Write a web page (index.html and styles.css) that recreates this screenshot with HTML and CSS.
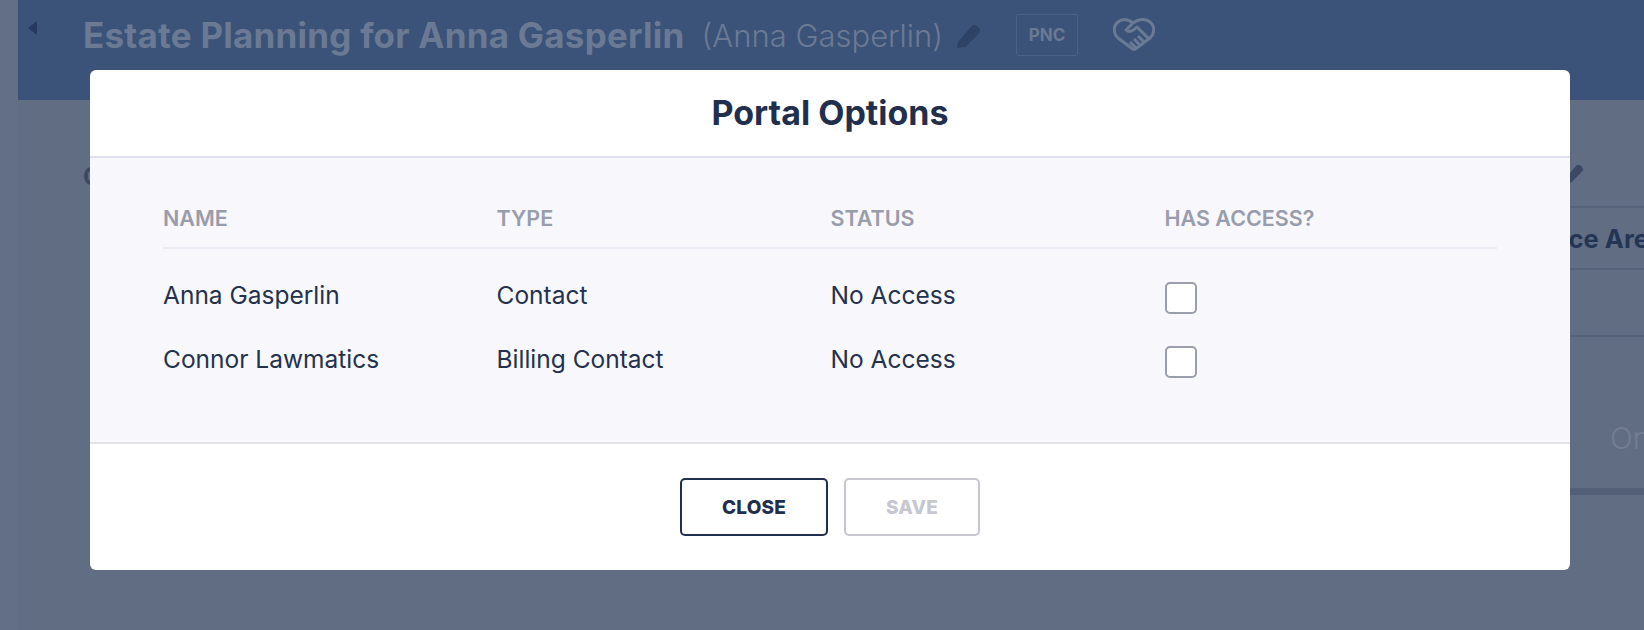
FILE: index.html
```html
<!DOCTYPE html>
<html lang="en">
    <head>
        <meta charset="UTF-8" />
        <meta name="viewport" content="width=device-width, initial-scale=1.0" />
        <title>Portal Options</title>

        <link rel="stylesheet" href="styles.css">
    </head>
    <body>
        <div class="page">
            <aside class="sidebar"></aside>

            <div class="main">
                <header class="matter-bar">
                    <span class="collapse-arrow"></span>
                    <h1>Estate Planning for Anna Gasperlin</h1>
                    <span class="client">(Anna Gasperlin)</span>
                    <svg class="pencil" viewBox="0 0 24 24">
                        <path d="M2 18 L15 3 Q17 1 20 3 L22 5 Q24 8 22 10 L9 23 L1 24 Z" />
                    </svg>
                    <span class="pnc">PNC</span>
                    <svg class="handshake" viewBox="0 0 42 34">
                        <path d="M21 32 L5 20 C0 15 0 8 5 4 C10 0 16 2 20 5" />
                        <path d="M21 32 L37 20 C42 15 42 8 37 4 C32 0 25 1 20 5 L13 12 C16 15 20 13 24 9 L35 20" />
                        <path d="M31 24 L25 18 M27 27 L21 21 M23 30 L17 24" />
                    </svg>
                </header>

                <div class="behind">
                    <span class="behind-label">Contact</span>
                    <div class="behind-panel">
                        <svg class="pencil pencil-small" viewBox="0 0 24 24">
                            <path d="M2 18 L15 3 Q17 1 20 3 L22 5 Q24 8 22 10 L9 23 L1 24 Z" />
                        </svg>
                        <div class="panel-row panel-tab">Practice Area</div>
                        <div class="panel-row panel-empty"></div>
                        <div class="panel-row panel-text">Once</div>
                        <div class="panel-bar"></div>
                    </div>
                </div>
            </div>
        </div>

        <div class="overlay">
            <div class="modal">
                <h2>Portal Options</h2>

                <div class="modal-body">
                    <div class="grid-row grid-head">
                        <span>Name</span>
                        <span>Type</span>
                        <span>Status</span>
                        <span>Has Access?</span>
                    </div>
                    <div class="grid-row">
                        <span>Anna Gasperlin</span>
                        <span>Contact</span>
                        <span>No Access</span>
                        <span class="check"></span>
                    </div>
                    <div class="grid-row">
                        <span>Connor Lawmatics</span>
                        <span>Billing Contact</span>
                        <span>No Access</span>
                        <span class="check"></span>
                    </div>
                </div>

                <div class="modal-footer">
                    <button class="btn btn-close">Close</button>
                    <button class="btn btn-save">Save</button>
                </div>
            </div>
        </div>
    </body>
</html>
```

FILE: styles.css
```css
* {
    box-sizing: border-box;
    font-family: Inter, "Open Sans", Arial, sans-serif;
}
html,
body {
    margin: 0;
    height: 100%;
    overflow: hidden;
}
body {
    position: relative;
    background: #606d83;
}
.page {
    display: flex;
    height: 630px;
}
.sidebar {
    width: 18px;
    background: #636f86;
}
.main {
    flex: 1;
    min-width: 0;
}

/* blurred page behind the dialog */
.matter-bar {
    display: flex;
    align-items: center;
    height: 100px;
    padding: 0 0 30px 10px;
    background: #3b5378;
    color: #6b7a94;
}
.collapse-arrow {
    width: 0;
    height: 0;
    margin-bottom: 14px;
    border-top: 7px solid transparent;
    border-bottom: 7px solid transparent;
    border-right: 9px solid #253a5e;
}
.matter-bar h1 {
    margin: 0 0 0 46px;
    font-size: 35px;
    font-weight: 700;
    letter-spacing: 0.23px;
    white-space: nowrap;
}
.client {
    margin-left: 17px;
    font-size: 31px;
    font-weight: 300;
    white-space: nowrap;
}
.pencil {
    width: 25px;
    height: 25px;
    margin-left: 13px;
    fill: #2d4265;
}
.pnc {
    display: flex;
    align-items: center;
    justify-content: center;
    width: 62px;
    height: 42px;
    margin-left: 35px;
    border: 1px solid #4c6183;
    border-radius: 2px;
    font-size: 17px;
    font-weight: 700;
}
.handshake {
    width: 42px;
    height: 34px;
    margin-left: 35px;
    fill: none;
    stroke: #6b7a94;
    stroke-width: 3;
    stroke-linejoin: round;
}
.behind {
    display: flex;
    justify-content: space-between;
    padding: 64px 0 0 65px;
}
.behind-label {
    margin-top: -2px;
    font-size: 24px;
    font-weight: 700;
    color: #3b4965;
}
.behind-panel {
    width: 300px;
    flex-shrink: 0;
    margin-right: -152px;
}
.pencil-small {
    display: block;
    width: 20px;
    height: 20px;
    margin: -1px 0 23px 68px;
    fill: #3b4965;
}
.panel-row {
    border-bottom: 2px solid #556279;
    white-space: nowrap;
}
.panel-tab {
    height: 64px;
    padding-top: 15px;
    border-top: 2px solid #556279;
    font-size: 25.5px;
    font-weight: 700;
    color: #243454;
}
.panel-empty {
    height: 67px;
}
.panel-text {
    height: 151px;
    padding: 83px 0 0 114px;
    border-bottom: 0;
    font-size: 30px;
    font-weight: 300;
    color: #737e93;
}
.panel-bar {
    height: 7px;
    background: #525f76;
}

/* dialog */
.overlay {
    position: absolute;
    top: 0;
    left: 16px;
    right: 0;
    display: flex;
    justify-content: center;
    padding-top: 70px;
}
.modal {
    width: 1480px;
    height: 500px;
    border-radius: 6px;
    background: #fff;
    overflow: hidden;
    color: #24324d;
}
.modal h2 {
    margin: 0;
    height: 88px;
    border-bottom: 2px solid #dfe2ea;
    font-size: 34px;
    font-weight: 700;
    line-height: 86px;
    text-align: center;
    color: #1f2f4d;
}
.modal-body {
    height: 286px;
    padding: 39px 73px 0;
    border-bottom: 2px solid #e2e2e9;
    background: #f7f7fc;
}
.grid-row {
    display: grid;
    grid-template-columns: 333.5px 334px 334px 1fr;
    align-items: center;
    height: 64px;
    font-size: 24.5px;
    font-weight: 400;
}
.grid-row span {
    margin-bottom: 6px;
}
.grid-row .check {
    margin-bottom: 0;
}
.grid-head {
    height: 52px;
    margin-bottom: 17px;
    padding-bottom: 7px;
    border-bottom: 2px solid #e9ebf4;
    font-size: 21.5px;
    font-weight: 600;
    text-transform: uppercase;
    color: #999dab;
}
.grid-head span {
    margin-bottom: 2px;
}
.check {
    width: 32px;
    height: 32px;
    border: 2px solid #9a9daa;
    border-radius: 5px;
    background: #fff;
}
.modal-footer {
    display: flex;
    justify-content: center;
    gap: 16px;
    padding-top: 34px;
}
.btn {
    height: 58px;
    border: 2px solid #1f2f4d;
    border-radius: 5px;
    background: #fff;
    font-size: 19px;
    font-weight: 800;
    letter-spacing: 0.2px;
    text-transform: uppercase;
    color: #1f2f4d;
}
.btn-close {
    width: 148px;
}
.btn-save {
    width: 136px;
    border-color: #c6c7d0;
    color: #c6c7d0;
}
```
